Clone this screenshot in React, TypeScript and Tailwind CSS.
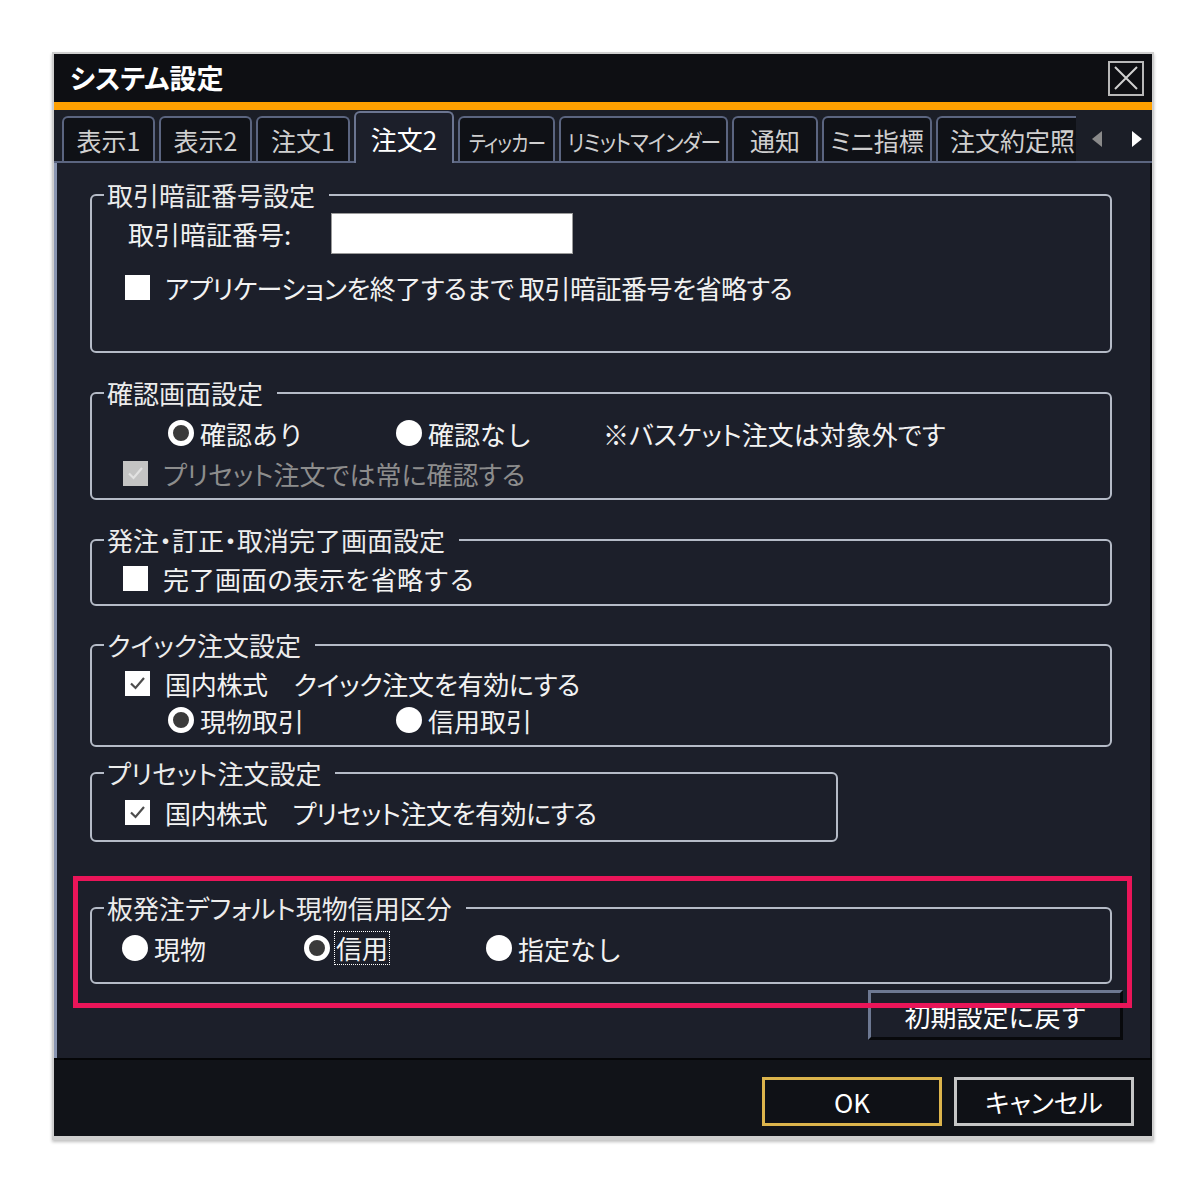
import React from "react";

const palt = "[font-feature-settings:'palt']";

function Radio({ on }: { on?: boolean }) {
    // "on" = ring style (white ring, dark centre); otherwise solid white disc
    return on ? (
        <span className="inline-block w-[26px] h-[26px] rounded-full border-[5px] border-white bg-[#3a3a3a] shrink-0" />
    ) : (
        <span className="inline-block w-[26px] h-[26px] rounded-full bg-white shrink-0" />
    );
}

function Check({ checked, disabled }: { checked?: boolean; disabled?: boolean }) {
    return (
        <span
            className={`inline-flex items-center justify-center w-[25px] h-[25px] shrink-0 ${disabled ? "bg-[#c4c4c4]" : "bg-white"}`}
        >
            {checked && (
                <svg width="19" height="19" viewBox="0 0 19 19">
                    <path
                        d="M3 9.5 L7.5 14 L16 4"
                        fill="none"
                        stroke={disabled ? "#e2e2e2" : "#4d4d4d"}
                        strokeWidth="2.2"
                    />
                </svg>
            )}
        </span>
    );
}

function Group({
    title,
    className,
    children,
}: {
    title: string;
    className: string;
    children?: React.ReactNode;
}) {
    return (
        <fieldset className={`border-2 border-[#b5bbc7] rounded-[6px] ${className}`}>
            <legend className={`ml-[12px] pl-[3px] pr-[14px] text-[26px] leading-[24px] text-[#ececec] ${palt}`}>
                {title}
            </legend>
            {children}
        </fieldset>
    );
}

function Tab({
    label,
    w,
    active,
    last,
    squeeze,
}: {
    label: string;
    w: string;
    active?: boolean;
    last?: boolean;
    squeeze?: string;
}) {
    if (active) {
        return (
            <div
                className={`${w} h-[52px] -mb-[2px] relative z-10 bg-[#1c1f2a] border-2 border-b-0 border-[#6b7591] rounded-t-[6px] flex items-start justify-center pt-[6px] text-[26px] text-white ${palt}`}
            >
                {label}
            </div>
        );
    }
    return (
        <div
            className={`${w} h-[45px] bg-[#0f1116] border-2 border-b-0 border-[#5b6580] rounded-t-[6px] flex items-center pt-[3px] text-[25px] text-[#cfcfcf] whitespace-nowrap ${last ? "overflow-hidden border-r-0 rounded-tr-none justify-start pl-[12px]" : "justify-center"} ${palt}`}
        >
            {squeeze ? <span className={`inline-block shrink-0 tracking-[-1px] ${squeeze}`}>{label}</span> : label}
        </div>
    );
}

export default function App() {
    return (
        <div className="w-[1200px] h-[1192px] bg-white pt-[52px] pl-[52px] font-['Noto_Sans_CJK_JP','Noto_Sans',sans-serif]">
            <div className="w-[1102px] flex flex-col border-2 border-b-[4px] border-[#cfcfcf] shadow-[0_2px_3px_rgba(0,0,0,0.25)]">
                {/* Title bar */}
                <div className="h-[48px] bg-[#0e0f13] flex items-center justify-between pl-[16px] pr-[8px]">
                    <span className={`text-[27px] font-bold text-white ${palt}`}>システム設定</span>
                    <span className="w-[36px] h-[35px] border-2 border-[#b8b8b8] flex items-center justify-center">
                        <svg width="28" height="28" viewBox="0 0 28 28">
                            <path d="M3 3 L25 25 M25 3 L3 25" stroke="#d0d0d0" strokeWidth="2" />
                        </svg>
                    </span>
                </div>
                <div className="h-[8px] bg-[#ffa000]" />

                {/* Tabs */}
                <div className="h-[53px] bg-[#1b1e27] border-b-2 border-[#5b6580] flex items-end pl-[8px] gap-[4px]">
                    <Tab label="表示1" w="w-[93px]" />
                    <Tab label="表示2" w="w-[93px]" />
                    <Tab label="注文1" w="w-[94px]" />
                    <Tab label="注文2" w="w-[100px]" active />
                    <Tab label="ティッカー" w="w-[97px]" squeeze="text-[22px] scale-x-[0.85]" />
                    <Tab label="リミットマインダー" w="w-[169px]" squeeze="text-[23px] scale-x-[0.9]" />
                    <Tab label="通知" w="w-[86px]" />
                    <Tab label="ミニ指標" w="w-[110px]" />
                    <Tab label="注文約定照会" w="w-[140px]" last />
                    <div className="h-[45px] flex items-center gap-[30px] pl-[12px]">
                        <svg width="10" height="16" viewBox="0 0 10 16">
                            <polygon points="10,0 10,16 0,8" fill="#8a8a8a" />
                        </svg>
                        <svg width="10" height="16" viewBox="0 0 10 16">
                            <polygon points="0,0 0,16 10,8" fill="#ffffff" />
                        </svg>
                    </div>
                </div>

                {/* Content */}
                <div className="h-[895px] bg-[#1c1f2a] border-l-[3px] border-l-[#8a96b2] border-r-2 border-r-[#0b0c10] pl-[33px] pr-[27px] pt-[20px] flex flex-col text-[26px] text-[#f2f2f2]">
                    <Group title="取引暗証番号設定" className="h-[170px] mr-[11px]">
                        <div className="mt-[2px] h-[48px] flex items-center pl-[36px]">
                            <span className={`w-[203px] ${palt}`}>取引暗証番号:</span>
                            <span className="w-[242px] h-[41px] bg-white border border-[#9a9a9a]" />
                        </div>
                        <div className="mt-[12px] h-[36px] flex items-center pl-[33px] gap-[15px]">
                            <Check />
                            <span className={`${palt} tracking-[-0.5px]`}>アプリケーションを終了するまで 取引暗証番号を省略する</span>
                        </div>
                    </Group>

                    <Group title="確認画面設定" className="h-[119px] mt-[28px] mr-[11px]">
                        <div className="mt-[10px] h-[36px] flex items-center pl-[76px]">
                            <div className="w-[228px] flex items-center gap-[6px]">
                                <Radio on />
                                <span>確認あり</span>
                            </div>
                            <div className="w-[207px] flex items-center gap-[6px]">
                                <Radio />
                                <span>確認なし</span>
                            </div>
                            <span className={palt}>※バスケット注文は対象外です</span>
                        </div>
                        <div className="mt-[6px] h-[32px] flex items-center pl-[31px] gap-[15px] text-[#8d8d8d]">
                            <Check checked disabled />
                            <span className={palt}>プリセット注文では常に確認する</span>
                        </div>
                    </Group>

                    <Group title="発注・訂正・取消完了画面設定" className="h-[78px] mt-[28px] mr-[11px]">
                        <div className="mt-[8px] h-[36px] flex items-center pl-[31px] gap-[15px]">
                            <Check />
                            <span>完了画面の表示を省略する</span>
                        </div>
                    </Group>

                    <Group title="クイック注文設定" className="h-[114px] mt-[27px] mr-[11px]">
                        <div className="mt-[8px] h-[36px] flex items-center pl-[33px] gap-[15px]">
                            <Check checked />
                            <span className={`${palt} tracking-[-0.3px]`}>国内株式　クイック注文を有効にする</span>
                        </div>
                        <div className="mt-[2px] h-[34px] flex items-center pl-[76px]">
                            <div className="w-[228px] flex items-center gap-[6px]">
                                <Radio on />
                                <span>現物取引</span>
                            </div>
                            <div className="flex items-center gap-[6px]">
                                <Radio />
                                <span>信用取引</span>
                            </div>
                        </div>
                    </Group>

                    <Group title="プリセット注文設定" className="h-[81px] w-[748px] mt-[14px]">
                        <div className="mt-[9px] h-[36px] flex items-center pl-[33px] gap-[15px]">
                            <Check checked />
                            <span className={`${palt} tracking-[-0.5px]`}>国内株式　プリセット注文を有効にする</span>
                        </div>
                    </Group>

                    <div className="relative mt-[54px] mr-[11px]">
                        <Group title="板発注デフォルト現物信用区分" className="h-[88px]">
                            <div className="mt-[10px] h-[36px] flex items-center pl-[30px]">
                                <div className="w-[182px] flex items-center gap-[6px]">
                                    <Radio />
                                    <span>現物</span>
                                </div>
                                <div className="w-[182px] flex items-center gap-[4px]">
                                    <Radio on />
                                    <span className="border border-dotted border-white px-[1px] leading-[32px]">信用</span>
                                </div>
                                <div className="flex items-center gap-[6px]">
                                    <Radio />
                                    <span>指定なし</span>
                                </div>
                            </div>
                        </Group>
                        {/* highlight overlay */}
                        <div className="absolute -top-[20px] -left-[17px] -right-[20px] -bottom-[24px] border-[5px] border-[#ea1559] z-20 pointer-events-none" />
                    </div>

                    <div className="mt-[6px] self-end">
                        <button
                            type="button"
                            className="w-[255px] h-[50px] bg-[#1c1f2a] border-[3px] border-t-[#6d7892] border-l-[#6d7892] border-b-[#08090c] border-r-[#08090c] text-[26px] text-white flex items-center justify-center"
                        >
                            初期設定に戻す
                        </button>
                    </div>
                </div>

                <div className="h-[2px] bg-[#050608]" />

                {/* Footer */}
                <div className="h-[76px] bg-[#111318] flex items-start justify-end pt-[17px] pr-[18px] gap-[12px]">
                    <button
                        type="button"
                        className="w-[180px] h-[49px] bg-[#0f1116] border-[3px] border-[#dcb44c] text-[26px] text-white flex items-center justify-center"
                    >
                        OK
                    </button>
                    <button
                        type="button"
                        className={`w-[180px] h-[49px] bg-[#0f1116] border-[3px] border-[#c6c6c6] text-[26px] text-white flex items-center justify-center ${palt}`}
                    >
                        キャンセル
                    </button>
                </div>
            </div>
        </div>
    );
}
